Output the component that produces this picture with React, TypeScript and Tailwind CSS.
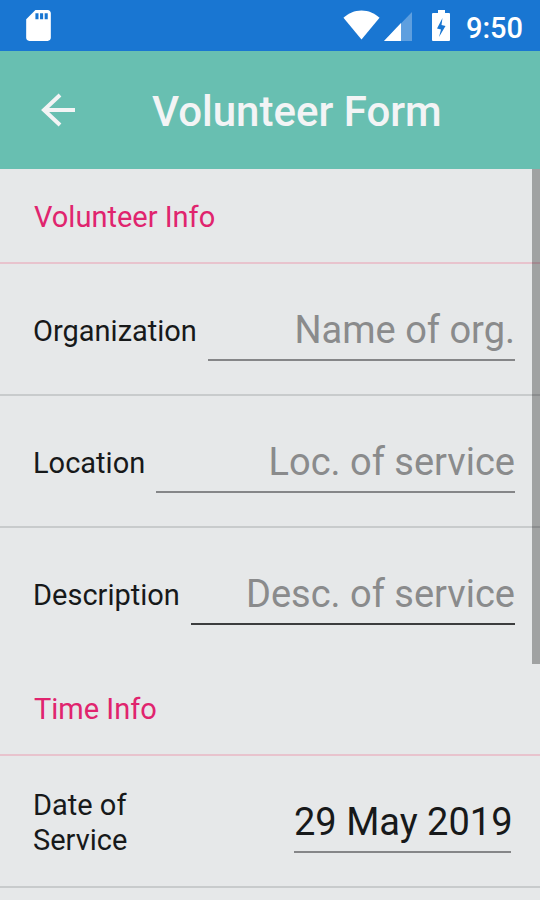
import React, { useState } from "react";

function StatusBar() {
  return (
    <div className="flex h-[51px] items-center bg-[#1976d2] pr-[17px] pl-5 text-white">
      <svg viewBox="0 0 24 24" className="size-[37px]" fill="currentColor" aria-hidden="true">
        <path d="M18 2h-8L4.02 8 4 20c0 1.1.9 2 2 2h12c1.1 0 2-.9 2-2V4c0-1.1-.9-2-2-2zm-6 6h-2V4h2v4zm3 0h-2V4h2v4zm3 0h-2V4h2v4z" />
      </svg>
      <div className="ml-auto flex items-center">
        <svg viewBox="0 0 24 24" className="size-[37px]" fill="currentColor" aria-hidden="true">
          <path d="M12 21L23.700 7C20.500 4 16.500 2.200 12 2.200S3.500 4 .3 7z" />
        </svg>
        <svg viewBox="0 0 28 31" className="ml-1 h-[31px] w-7" fill="currentColor" aria-hidden="true">
          <path d="M0 31L28 2V31z" opacity=".3" />
          <path d="M0 31L17 13V31z" />
        </svg>
        <svg viewBox="0 0 18 31" className="ml-5 h-[31px] w-[18px]" fill="currentColor" aria-hidden="true">
          <path
            fillRule="evenodd"
            d="M6 0h7v3h4a1 1 0 0 1 1 1v26a1 1 0 0 1-1 1H1a1 1 0 0 1-1-1V4a1 1 0 0 1 1-1h5zM10.500 8L5 18.500L9 19.500L7 27L13.500 16L9.500 15z"
          />
        </svg>
        <span className="ml-4 pt-1 text-[29px] leading-9 font-medium">9:50</span>
      </div>
    </div>
  );
}

function AppBar() {
  return (
    <header className="flex h-[118px] items-center bg-[#68bfb1] px-10 pt-1 text-[#f3f4f5]">
      <button type="button" aria-label="Back" className="-mt-1">
        <svg viewBox="0 0 36 36" className="size-9" fill="none" stroke="currentColor" strokeWidth="4" aria-hidden="true">
          <path d="M35 18H5M20 3L4 18L20 33" />
        </svg>
      </button>
      <h1 className="ml-[76px] text-[42px] leading-[48px] font-medium">Volunteer Form</h1>
    </header>
  );
}

function SectionTitle({ children }: { children: React.ReactNode }) {
  return (
    <h2 className="flex h-[95px] items-center border-b-2 border-[#e8c3cd] pt-1 pl-[34px] text-[29px] leading-[35px] text-[#e0246e]">
      {children}
    </h2>
  );
}

const rowBase = "flex h-[132px] items-center border-b-2 pl-[33px]";
const labelBase = "pt-1 text-[29px] leading-[35px]";
const inputBase =
  "h-16 rounded-none border-b-2 bg-transparent pt-1 text-[38px] outline-none placeholder:text-[#8a8b8c] placeholder:opacity-100";

type FieldProps = { id: string; label: string; hint: string; last?: boolean };

function TextField({ id, label, hint, last }: FieldProps) {
  const [value, setValue] = useState("");
  return (
    <div className={`${rowBase} gap-[11px] pr-[25px] ${last ? "border-transparent" : "border-[#c8cbcc]"}`}>
      <label htmlFor={id} className={labelBase}>
        {label}
      </label>
      <input
        id={id}
        type="text"
        value={value}
        placeholder={hint}
        onChange={(e) => setValue(e.target.value)}
        className={`${inputBase} min-w-0 flex-1 text-right ${last ? "border-[#3c3d3e]" : "border-[#858688]"}`}
      />
    </div>
  );
}

function DateField() {
  const [value, setValue] = useState("29 May 2019");
  return (
    <div className={`${rowBase} justify-between border-[#c8cbcc] pr-[29px]`}>
      <label htmlFor="date" className={`${labelBase} w-32`}>
        Date of Service
      </label>
      <input
        id="date"
        type="text"
        value={value}
        onChange={(e) => setValue(e.target.value)}
        className={`${inputBase} w-[217px] border-[#858688] text-center`}
      />
    </div>
  );
}

export default function App() {
  return (
    <div className="flex min-h-screen flex-col bg-[#e6e8e9] font-[Roboto,sans-serif] text-[#17191a]">
      <StatusBar />
      <AppBar />
      <main className="relative flex-1">
        <form className="flex flex-col gap-px">
          <section>
            <SectionTitle>Volunteer Info</SectionTitle>
            <TextField id="organization" label="Organization" hint="Name of org." />
            <TextField id="location" label="Location" hint="Loc. of service" />
            <TextField id="description" label="Description" hint="Desc. of service" last />
          </section>
          <section>
            <SectionTitle>Time Info</SectionTitle>
            <DateField />
          </section>
        </form>
        <div className="absolute top-0 right-0 h-[495px] w-2 bg-black/30" />
      </main>
    </div>
  );
}
